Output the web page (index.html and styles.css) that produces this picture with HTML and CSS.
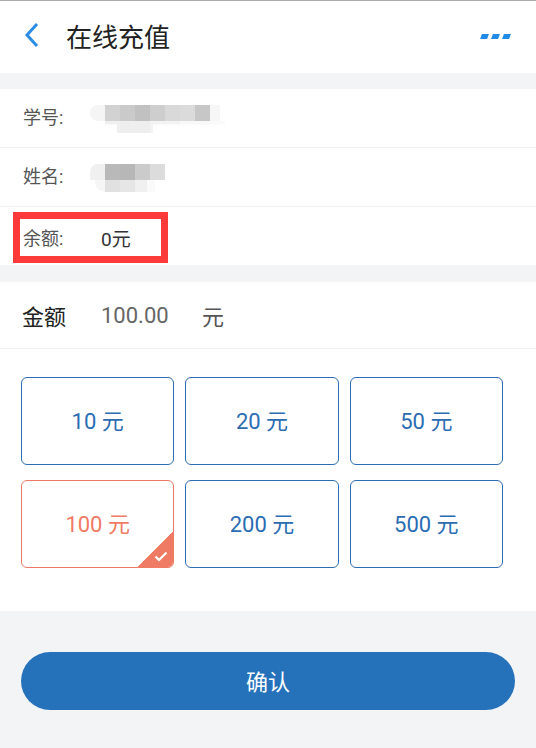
FILE: index.html
```html
<!DOCTYPE html>
<html lang="zh-CN">
<head>
    <meta charset="UTF-8">
    <meta name="viewport" content="width=device-width, initial-scale=1.0">
    <title>在线充值</title>
    <link rel="stylesheet" href="styles.css">
</head>
<body>
    <div class="topbar">
        <svg class="back" width="18" height="26" viewBox="0 0 18 26">
            <path d="M14 2 L4 13 L14 24" fill="none" stroke="#2b8ce6" stroke-width="3"/>
        </svg>
        <h1 class="title">在线充值</h1>
        <div class="more"><span></span><span></span><span></span></div>
    </div>

    <div class="info">
        <div class="row">
            <span class="label">学号:</span>
            <div class="mosaic wide">
                <div class="m-top"></div>
                <div class="m-bottom"></div>
            </div>
        </div>
        <div class="row">
            <span class="label">姓名:</span>
            <div class="mosaic short">
                <div class="m-top"></div>
                <div class="m-bottom"></div>
            </div>
        </div>
        <div class="row">
            <div class="balance">
                <span class="label">余额:</span>
                <span class="value">0元</span>
            </div>
        </div>
    </div>

    <div class="recharge">
        <div class="amount">
            <span class="amount-label">金额</span>
            <span class="amount-value">100.00</span>
            <span class="amount-unit">元</span>
        </div>
        <div class="options">
            <div class="option">10 元</div>
            <div class="option">20 元</div>
            <div class="option">50 元</div>
            <div class="option selected">100 元
                <svg class="tick" width="14" height="11" viewBox="0 0 14 11">
                    <path d="M1.5 5.5 L5 9 L12.5 1.5" fill="none" stroke="#fff" stroke-width="2.2"/>
                </svg>
            </div>
            <div class="option">200 元</div>
            <div class="option">500 元</div>
        </div>
    </div>

    <div class="footer">
        <button class="confirm">确认</button>
    </div>
</body>
</html>
```

FILE: styles.css
```css
body {
    margin: 0;
    background: #f3f4f6;
    font-family: Roboto, "Noto Sans CJK SC", sans-serif;
    color: #333;
}

.topbar {
    height: 68px;
    background: #fff;
    border-top: 1px solid #aaa;
    display: flex;
    align-items: center;
    padding: 0 26px 4px 23px;
}

.title {
    margin: 0 0 0 25px;
    font-size: 26px;
    font-weight: normal;
    color: #222;
    flex: 1;
}

.more {
    display: flex;
    gap: 4px;
    margin-top: 2px;
}

.more span {
    width: 7px;
    height: 5px;
    background: #1f8ae8;
    transform: skewX(-20deg);
}

.info {
    margin-top: 16px;
    background: #fff;
}

.row {
    height: 58px;
    display: flex;
    align-items: center;
    padding-left: 23px;
    border-bottom: 1px solid #f0f0f0;
}

.row:last-child {
    border-bottom: none;
}

.label {
    font-size: 18px;
    color: #555;
    width: 67px;
    margin-top: -4px;
}

.mosaic {
    height: 28px;
    margin-top: 2px;
}

.m-top {
    height: 16px;
}

.m-bottom {
    height: 12px;
}

.mosaic.wide .m-top {
    width: 130px;
    border-radius: 8px 0 0 8px;
    background: linear-gradient(to right,
        #f5f5f5 0 15px, #d2d2d2 15px 30px, #cacaca 30px 45px, #c1c1c1 45px 60px,
        #cecece 60px 75px, #d9d9d9 75px 90px, #dbdbdb 90px 105px, #c7c7c7 105px 120px,
        #f6f6f6 120px 130px);
}

.mosaic.wide .m-bottom {
    width: 120px;
    margin-left: 15px;
    background: linear-gradient(to right,
        #f0f0f0 0 15px, #eeeeee 15px 45px, #f3f3f3 45px 75px, #f8f8f8 75px 105px, #fafafa 105px 120px);
    clip-path: polygon(0 0, 100% 0, 100% 30%, 40% 30%, 40% 100%, 10% 100%, 10% 30%, 0 30%);
}

.mosaic.short .m-top {
    width: 75px;
    border-radius: 8px 0 0 0;
    background: linear-gradient(to right,
        #f0f0f0 0 15px, #b9b9b9 15px 30px, #b7b7b7 30px 45px, #cbcbcb 45px 60px, #dcdcdc 60px 75px);
}

.mosaic.short .m-bottom {
    width: 60px;
    margin-left: 5px;
    border-radius: 0 0 0 10px;
    background: linear-gradient(to right,
        #f6f6f6 0 10px, #e1e1e1 10px 25px, #e6e6e6 25px 40px, #f0f0f0 40px 52px, #fafafa 52px 60px);
}

.balance {
    display: flex;
    align-items: center;
    margin-left: -10px;
    margin-top: 2px;
    width: 138px;
    height: 37px;
    padding-left: 3px;
    border: 7px solid #fd3a3a;
}

.balance .label {
    width: 78px;
    margin-top: 0;
}

.value {
    font-size: 19px;
    color: #333;
}

.recharge {
    margin-top: 17px;
    background: #fff;
    padding-bottom: 43px;
}

.amount {
    height: 66px;
    display: flex;
    align-items: center;
    padding-left: 22px;
    border-bottom: 1px solid #f0f0f0;
    font-size: 22px;
}

.amount-label {
    color: #222;
    width: 79px;
}

.amount-value {
    color: #666;
    width: 101px;
}

.amount-unit {
    color: #555;
}

.options {
    display: grid;
    grid-template-columns: repeat(3, 1fr);
    gap: 15px 11px;
    padding: 28px 33px 0 21px;
}

.option {
    position: relative;
    box-sizing: border-box;
    height: 88px;
    border: 1.5px solid #2b6cb3;
    border-radius: 6px;
    display: flex;
    align-items: center;
    justify-content: center;
    padding-bottom: 4px;
    font-size: 22px;
    color: #2b6cb3;
    overflow: hidden;
}

.option.selected {
    border-color: #ef7b64;
    color: #ef7b64;
}

.option.selected::after {
    content: "";
    position: absolute;
    right: 0;
    bottom: 0;
    width: 36px;
    height: 36px;
    background: linear-gradient(135deg, transparent 50%, #ef7b64 50%);
}

.tick {
    position: absolute;
    right: 5px;
    bottom: 5px;
    z-index: 1;
}

.footer {
    padding: 41px 21px 0 21px;
}

.confirm {
    display: block;
    width: 100%;
    height: 58px;
    border: none;
    border-radius: 29px;
    background: #2571ba;
    color: #fff;
    font-family: "Noto Sans CJK SC", sans-serif;
    font-size: 22px;
    padding-bottom: 3px;
}
```
